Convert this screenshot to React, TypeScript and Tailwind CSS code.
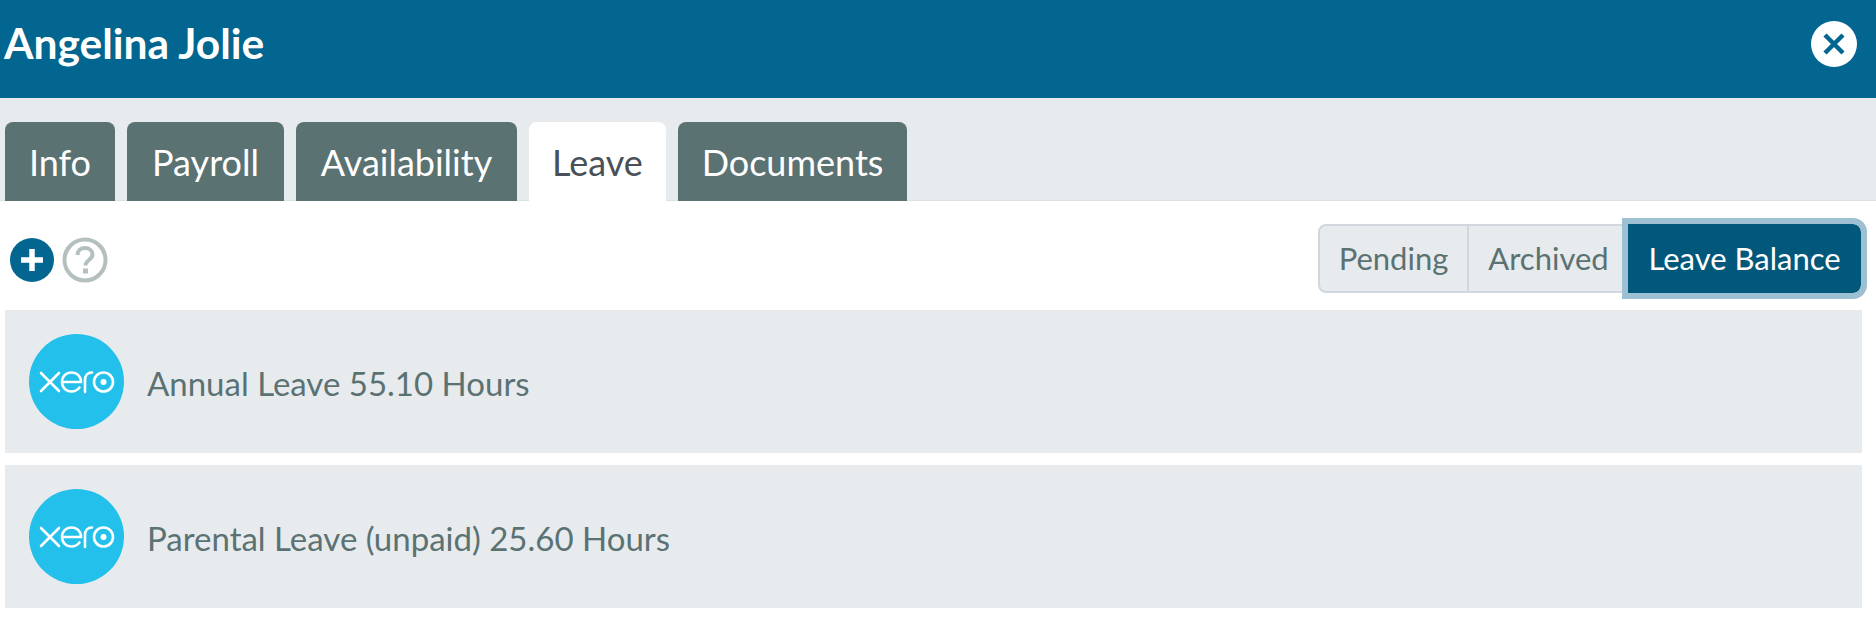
const tabs = [
  { label: "Info", width: "w-[110px]" },
  { label: "Payroll", width: "w-[157px]" },
  { label: "Availability", width: "w-[221px]" },
  { label: "Leave", width: "w-[137px]" },
  { label: "Documents", width: "w-[229px]" },
];

const balances = [
  "Annual Leave 55.10 Hours",
  "Parental Leave (unpaid) 25.60 Hours",
];

function XeroLogo() {
  return (
    <svg viewBox="0 0 95 95" className="w-[95px] h-[95px] shrink-0">
      <circle cx="47.5" cy="47.5" r="47.5" fill="#22c0ea" />
      <g fill="none" stroke="#fff" strokeWidth="2.6" strokeLinecap="round">
        <path d="M12 39l18 18M30 39L12 57" />
        <path d="M33.5 48H52c0-5.500-4-9.500-9.500-9.500S33 42.500 33 48s4 9.500 9.500 9.500c3.500 0 6-1.500 8-4" />
        <path d="M56 58V46c0-4.500 2.500-7.500 7-7.500" />
        <circle cx="74.500" cy="48" r="9.500" />
      </g>
      <circle cx="74.500" cy="48" r="3" fill="#fff" />
    </svg>
  );
}

function LeaveRow({ label }: { label: string }) {
  return (
    <div className="h-[143px] bg-[#e8ebee] flex items-center pl-6 gap-[23px]">
      <XeroLogo />
      <span className="text-[33px] pt-1 text-[#5b7273]">{label}</span>
    </div>
  );
}

export default function App() {
  return (
    <div className="w-[1876px] h-[617px] bg-white overflow-hidden font-['Lato','Open_Sans',sans-serif]">
      {/* Header */}
      <div className="h-[98px] bg-[#026690] flex items-center justify-between pl-1 pr-[19px] pb-[10px]">
        <h1 className="text-[42.5px] font-bold text-white -mt-[3px]">Angelina Jolie</h1>
        <button className="w-[46px] h-[46px] rounded-full bg-white flex items-center justify-center">
          <svg viewBox="0 0 24 24" className="w-[24px] h-[24px]">
            <path
              d="M3 3l18 18M21 3L3 21"
              stroke="#026690"
              strokeWidth="4.5"
              fill="none"
            />
          </svg>
        </button>
      </div>

      {/* Tabs */}
      <div className="h-[103px] bg-[#e8ebee] border-b border-[#dde1e4] flex items-end gap-3 pl-[5px]">
        {tabs.map((tab) => (
          <div
            key={tab.label}
            className={`${tab.width} ${
              tab.label === "Leave"
                ? "bg-white text-[#495057]"
                : "bg-[#5b7273] text-white"
            } h-[79px] -mb-px flex items-center justify-center rounded-t-lg text-[36px]`}
          >
            {tab.label}
          </div>
        ))}
      </div>

      {/* Toolbar */}
      <div className="h-[109px] flex items-center justify-between pl-[10px] pr-[15px] pt-[6px]">
        <div className="flex items-center gap-2 pt-[2px]">
          <svg viewBox="0 0 44 44" className="w-[44px] h-[44px]">
            <circle cx="22" cy="22" r="22" fill="#026690" />
            <path d="M22 11v22M11 22h22" stroke="#fff" strokeWidth="5.5" />
          </svg>
          <svg viewBox="0 0 46 46" className="w-[46px] h-[46px]">
            <circle cx="23" cy="23" r="20.5" fill="none" stroke="#b4c0c0" strokeWidth="4" />
            <path
              d="M15.5 18c0-4.500 3.300-7 7.500-7s7.500 2.500 7.500 6.500c0 5.500-7 5.500-7 11"
              fill="none"
              stroke="#b4c0c0"
              strokeWidth="4"
            />
            <rect x="21" y="31.5" width="5" height="5" fill="#b4c0c0" />
          </svg>
        </div>
        <div className="flex h-[69px] text-[31px]">
          <div className="w-[151px] flex items-center justify-center bg-[#e8ebee] border-2 border-[#d0d7de] rounded-l-lg text-[#5b7273]">
            Pending
          </div>
          <div className="w-[159px] flex items-center justify-center bg-[#e8ebee] border-y-2 border-[#d0d7de] text-[#5b7273]">
            Archived
          </div>
          <div className="w-[233px] flex items-center justify-center bg-[#02587b] rounded-r-lg text-white outline-[6px] outline-[#9dc0d2]">
            Leave Balance
          </div>
        </div>
      </div>

      {/* Leave balances */}
      <div className="flex flex-col gap-3 pl-[5px] pr-[14px]">
        {balances.map((item) => (
          <LeaveRow key={item} label={item} />
        ))}
      </div>
    </div>
  );
}
